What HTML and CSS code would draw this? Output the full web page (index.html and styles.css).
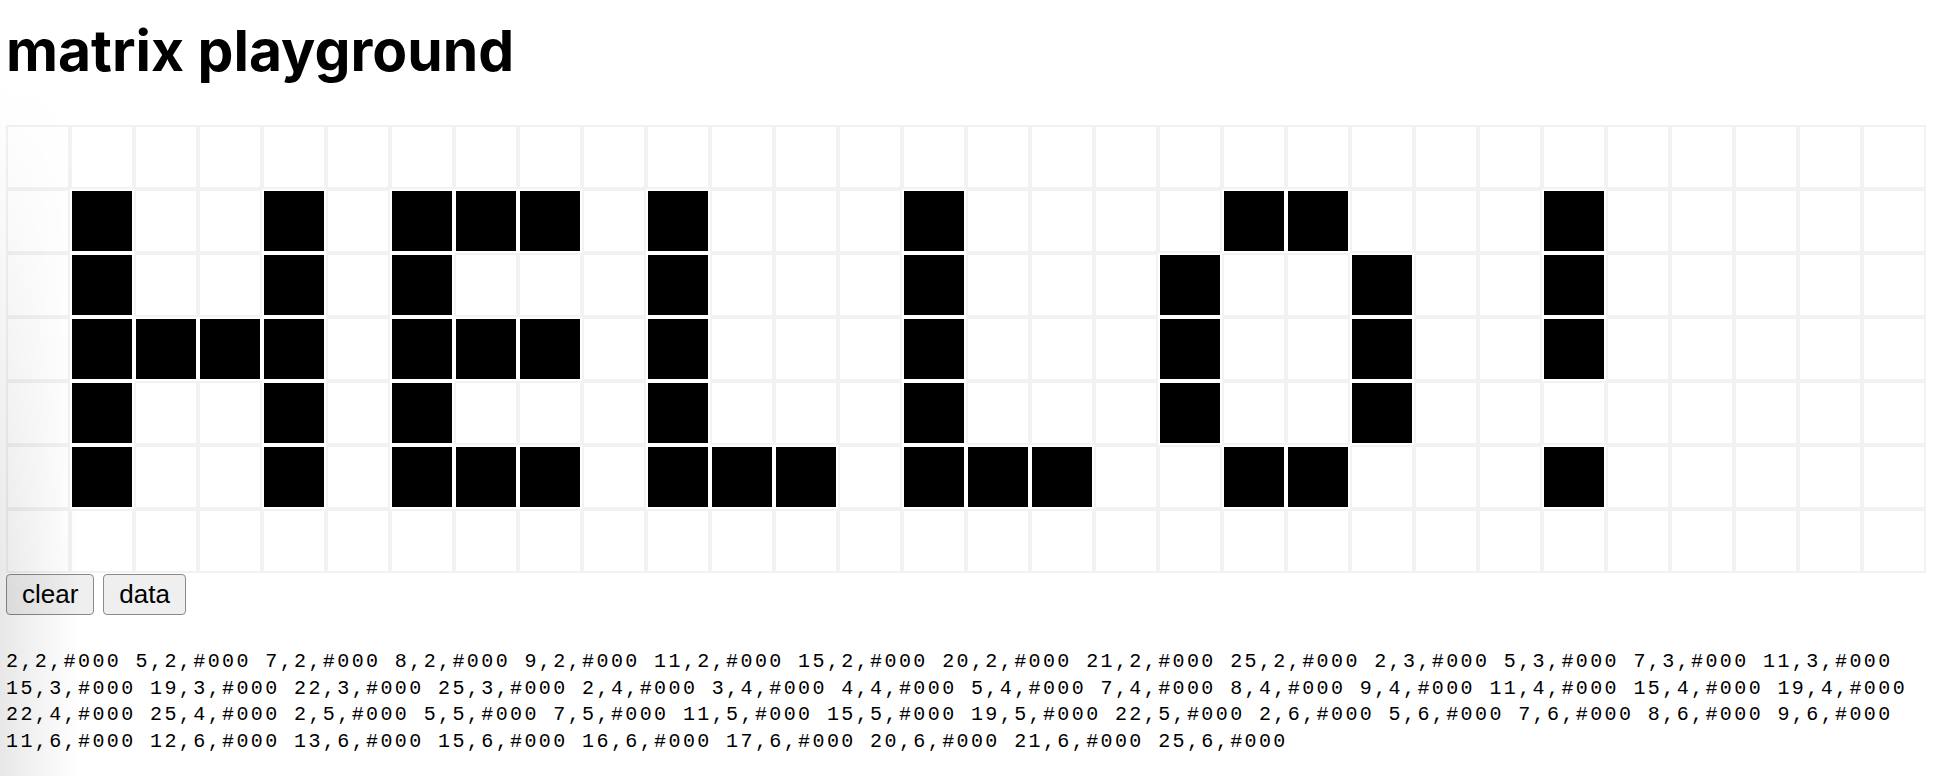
FILE: index.html
```html
<!DOCTYPE html>
<html lang="en">
<head>
<meta charset="utf-8">
<title>matrix playground</title>
<link rel="stylesheet" href="styles.css">
</head>
<body>
<h1 class="title">matrix playground</h1>
<div class="matrix">
<div class="px"></div><div class="px"></div><div class="px"></div><div class="px"></div><div class="px"></div><div class="px"></div><div class="px"></div><div class="px"></div><div class="px"></div><div class="px"></div><div class="px"></div><div class="px"></div><div class="px"></div><div class="px"></div><div class="px"></div><div class="px"></div><div class="px"></div><div class="px"></div><div class="px"></div><div class="px"></div><div class="px"></div><div class="px"></div><div class="px"></div><div class="px"></div><div class="px"></div><div class="px"></div><div class="px"></div><div class="px"></div><div class="px"></div><div class="px"></div>
<div class="px"></div><div class="px on"></div><div class="px"></div><div class="px"></div><div class="px on"></div><div class="px"></div><div class="px on"></div><div class="px on"></div><div class="px on"></div><div class="px"></div><div class="px on"></div><div class="px"></div><div class="px"></div><div class="px"></div><div class="px on"></div><div class="px"></div><div class="px"></div><div class="px"></div><div class="px"></div><div class="px on"></div><div class="px on"></div><div class="px"></div><div class="px"></div><div class="px"></div><div class="px on"></div><div class="px"></div><div class="px"></div><div class="px"></div><div class="px"></div><div class="px"></div>
<div class="px"></div><div class="px on"></div><div class="px"></div><div class="px"></div><div class="px on"></div><div class="px"></div><div class="px on"></div><div class="px"></div><div class="px"></div><div class="px"></div><div class="px on"></div><div class="px"></div><div class="px"></div><div class="px"></div><div class="px on"></div><div class="px"></div><div class="px"></div><div class="px"></div><div class="px on"></div><div class="px"></div><div class="px"></div><div class="px on"></div><div class="px"></div><div class="px"></div><div class="px on"></div><div class="px"></div><div class="px"></div><div class="px"></div><div class="px"></div><div class="px"></div>
<div class="px"></div><div class="px on"></div><div class="px on"></div><div class="px on"></div><div class="px on"></div><div class="px"></div><div class="px on"></div><div class="px on"></div><div class="px on"></div><div class="px"></div><div class="px on"></div><div class="px"></div><div class="px"></div><div class="px"></div><div class="px on"></div><div class="px"></div><div class="px"></div><div class="px"></div><div class="px on"></div><div class="px"></div><div class="px"></div><div class="px on"></div><div class="px"></div><div class="px"></div><div class="px on"></div><div class="px"></div><div class="px"></div><div class="px"></div><div class="px"></div><div class="px"></div>
<div class="px"></div><div class="px on"></div><div class="px"></div><div class="px"></div><div class="px on"></div><div class="px"></div><div class="px on"></div><div class="px"></div><div class="px"></div><div class="px"></div><div class="px on"></div><div class="px"></div><div class="px"></div><div class="px"></div><div class="px on"></div><div class="px"></div><div class="px"></div><div class="px"></div><div class="px on"></div><div class="px"></div><div class="px"></div><div class="px on"></div><div class="px"></div><div class="px"></div><div class="px"></div><div class="px"></div><div class="px"></div><div class="px"></div><div class="px"></div><div class="px"></div>
<div class="px"></div><div class="px on"></div><div class="px"></div><div class="px"></div><div class="px on"></div><div class="px"></div><div class="px on"></div><div class="px on"></div><div class="px on"></div><div class="px"></div><div class="px on"></div><div class="px on"></div><div class="px on"></div><div class="px"></div><div class="px on"></div><div class="px on"></div><div class="px on"></div><div class="px"></div><div class="px"></div><div class="px on"></div><div class="px on"></div><div class="px"></div><div class="px"></div><div class="px"></div><div class="px on"></div><div class="px"></div><div class="px"></div><div class="px"></div><div class="px"></div><div class="px"></div>
<div class="px"></div><div class="px"></div><div class="px"></div><div class="px"></div><div class="px"></div><div class="px"></div><div class="px"></div><div class="px"></div><div class="px"></div><div class="px"></div><div class="px"></div><div class="px"></div><div class="px"></div><div class="px"></div><div class="px"></div><div class="px"></div><div class="px"></div><div class="px"></div><div class="px"></div><div class="px"></div><div class="px"></div><div class="px"></div><div class="px"></div><div class="px"></div><div class="px"></div><div class="px"></div><div class="px"></div><div class="px"></div><div class="px"></div><div class="px"></div>
</div>
<div class="controls">
<button class="btn" type="button">clear</button>
<button class="btn" type="button">data</button>
</div>
<div class="data">2,2,#000 5,2,#000 7,2,#000 8,2,#000 9,2,#000 11,2,#000 15,2,#000 20,2,#000 21,2,#000 25,2,#000 2,3,#000 5,3,#000 7,3,#000 11,3,#000 15,3,#000 19,3,#000 22,3,#000 25,3,#000 2,4,#000 3,4,#000 4,4,#000 5,4,#000 7,4,#000 8,4,#000 9,4,#000 11,4,#000 15,4,#000 19,4,#000 22,4,#000 25,4,#000 2,5,#000 5,5,#000 7,5,#000 11,5,#000 15,5,#000 19,5,#000 22,5,#000 2,6,#000 5,6,#000 7,6,#000 8,6,#000 9,6,#000 11,6,#000 12,6,#000 13,6,#000 15,6,#000 16,6,#000 17,6,#000 20,6,#000 21,6,#000 25,6,#000</div>
<div class="edge-shade"></div>
</body>
</html>
```

FILE: styles.css
```css
html, body {
  background: #ffffff;
}

body {
  margin: 0;
  padding: 0 6px;
  font-family: "Liberation Sans", Arial, sans-serif;
  color: #000;
}

.title {
  margin: 17px 0 40px 0;
  font-family: Inter, "Liberation Sans", sans-serif;
  font-weight: 700;
  font-size: 57px;
  line-height: 68px;
  letter-spacing: 0;
}

.matrix {
  display: grid;
  grid-template-columns: repeat(30, 64px);
  grid-auto-rows: 64px;
  width: 1920px;
}

.px {
  box-sizing: border-box;
  border: 2px solid #f2f2f2;
  background: #ffffff;
}

.px.on {
  background: #000000;
  border-color: #ffffff;
}

.controls {
  display: flex;
  gap: 9px;
  margin-top: 1px;
}

.btn {
  margin: 0;
  padding: 5px 15px;
  border: 1px solid #8a8a8a;
  border-radius: 4px;
  background: #efefef;
  color: #000;
  font-family: "Liberation Sans", Arial, sans-serif;
  font-size: 26px;
  line-height: 29px;
}

.data {
  margin-top: 34px;
  font-family: "Liberation Mono", "Courier New", monospace;
  font-size: 20px;
  letter-spacing: 2.4px;
  line-height: 26.7px;
  color: #000;
}

.edge-shade {
  position: fixed;
  left: 0;
  top: 0;
  bottom: 0;
  width: 80px;
  pointer-events: none;
  background: linear-gradient(to right, rgba(0, 0, 0, 0.09), rgba(0, 0, 0, 0));
  -webkit-mask-image: linear-gradient(to bottom, transparent 80px, #000 600px);
  mask-image: linear-gradient(to bottom, transparent 80px, #000 600px);
}
```
